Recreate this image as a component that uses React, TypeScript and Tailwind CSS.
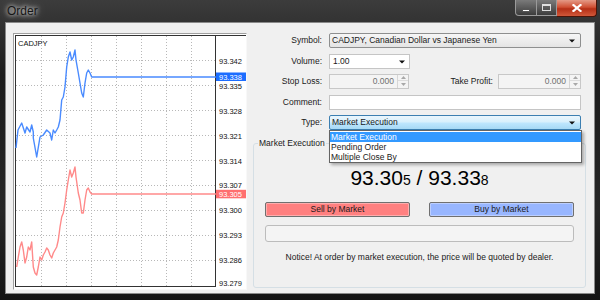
import React from "react";

const blue =
  "16,148 18,130 21.7,123 25,133 26.7,127 30,132 31.7,125 33.3,132 33.3,138 36.7,157 40,137 43.3,135 46.7,130 50,133 51.7,140 53.3,130 55,133 56.7,130 58.3,127 60,120 61.7,100 63.3,97 65,87 66.7,67 68.3,57 70,52 71.7,60 73.3,57 75,50 76,60 78.3,73 80,83 81.7,93 83.3,97 85,83 86.7,73 88.3,70 90,73 91.7,77 216,77";
const red =
  "16.7,267 18.3,257 20,247 21.7,242 23.3,250 25,263 26.7,257 28.3,247 30,250 31.7,242 33.3,267 35,273 36.7,275 38.3,267 40,257 41.7,260 43.3,255 45,252 46.7,248 48.3,250 50,255 51.7,258 53.3,253 55,250 56.7,247 58.3,240 60,227 61.7,217 63.3,213 65,203 66.7,190 68.3,180 70,170 71.7,177 73.3,173 75,167 76,177 78.3,193 80,200 81.7,213 83.3,213 85,200 86.7,190 88.3,188 90,192 91.7,194 216,194";

const labels: [string, number][] = [
  ["93.342", 61],
  ["93.335", 86],
  ["93.328", 111],
  ["93.321", 136],
  ["93.314", 161],
  ["93.307", 185],
  ["93.300", 210],
  ["93.293", 235],
  ["93.286", 260],
  ["93.279", 283],
];

function Chart() {
  const vx = [41.5, 66.5, 91.5, 116.5, 141.5, 166.5, 191.5];
  const hy = [60.5, 85.5, 110.5, 135.5, 160.5, 185.5, 210.5, 235.5, 260.5];
  return (
    <svg width="231" height="254" viewBox="15 35 231 254" className="block">
      {vx.map((x) => (
        <line key={"v" + x} x1={x} y1={36} x2={x} y2={286} stroke="#b8b8b8" strokeWidth="1" strokeDasharray="1 2" />
      ))}
      {hy.map((y) => (
        <line key={"h" + y} x1={16} y1={y} x2={215} y2={y} stroke="#b8b8b8" strokeWidth="1" strokeDasharray="1 2" />
      ))}
      <line x1={15} y1={35.5} x2={246} y2={35.5} stroke="#333" />
      <line x1={15.5} y1={35} x2={15.5} y2={287} stroke="#333" />
      <line x1={215.5} y1={35} x2={215.5} y2={287} stroke="#333" />
      <line x1={15} y1={286.5} x2={216} y2={286.5} stroke="#333" />
      <polyline points={blue} fill="none" stroke="#4a8bff" strokeWidth="1.4" strokeLinejoin="round" />
      <polyline points={red} fill="none" stroke="#ff8a8a" strokeWidth="1.4" strokeLinejoin="round" />
      <text x={18} y={45.5} fontSize="7.5" fill="#111" fontFamily="Liberation Sans, Arial, sans-serif">
        CADJPY
      </text>
      {labels.map(([t, y]) => (
        <text key={t} x={219} y={y + 2.7} fontSize="7.5" fill="#111" fontFamily="Liberation Sans, Arial, sans-serif">
          {t}
        </text>
      ))}
      <rect x={216} y={72.5} width={30} height={8.5} fill="#1c6dff" />
      <text x={219} y={79.5} fontSize="7.5" fill="#fff" fontFamily="Liberation Sans, Arial, sans-serif">
        93.338
      </text>
      <rect x={216} y={189.8} width={30} height={8.5} fill="#ff6f6f" />
      <text x={219} y={196.8} fontSize="7.5" fill="#fff" fontFamily="Liberation Sans, Arial, sans-serif">
        93.305
      </text>
    </svg>
  );
}

function Arrow() {
  return (
    <svg width="6" height="4" viewBox="0 0 6 4" className="block shrink-0">
      <path d="M0 0.5H6L3 3.5Z" fill="#111" />
    </svg>
  );
}

function Spinner() {
  return (
    <div className="w-[11px] h-[13px] flex flex-col border-l border-[#d6d6d6] bg-[#f4f4f4]">
      <div className="h-[6px] flex items-center justify-center border-b border-[#dcdcdc]">
        <svg width="5" height="3" viewBox="0 0 5 3" className="block">
          <path d="M0 3H5L2.5 0Z" fill="#a8a8a8" />
        </svg>
      </div>
      <div className="flex-1 flex items-center justify-center">
        <svg width="5" height="3" viewBox="0 0 5 3" className="block">
          <path d="M0 0H5L2.5 3Z" fill="#a8a8a8" />
        </svg>
      </div>
    </div>
  );
}

function TitleBar() {
  return (
    <div className="h-[22px] flex shrink-0">
      <span className="ml-[7px] mt-[4px] text-[12px] leading-[14px] text-[#151515] [text-shadow:0_0_4px_#fff,0_0_8px_#bbb]">
        Order
      </span>
      <div className="ml-auto mr-[3px] flex items-start">
        <div className="w-[22px] h-[16px] rounded-bl-[4px] border border-t-0 border-[#9a9a9a] bg-[linear-gradient(180deg,#7a7a7a,#3c3c3c)] flex items-end justify-center pb-[3px]">
          <div className="w-[8px] h-[3px] bg-white border border-[#555]" />
        </div>
        <div className="w-[20px] h-[16px] border border-t-0 border-l-0 border-[#9a9a9a] bg-[linear-gradient(180deg,#7a7a7a,#3c3c3c)] flex items-center justify-center">
          <div className="w-[9px] h-[7px] border border-white border-t-[2px] opacity-80" />
        </div>
        <div className="w-[40px] h-[17px] rounded-br-[4px] border border-t-0 border-l-0 border-[#4a1408] bg-[linear-gradient(180deg,#e49a86,#cf4f33_45%,#b42f16_55%,#d0583a)] flex items-center justify-center">
          <svg width="10" height="8" viewBox="0 0 10 8" className="block">
            <path d="M1.5 1L8.5 7M8.5 1L1.5 7" stroke="#fff" strokeWidth="2.2" strokeLinecap="square" />
          </svg>
        </div>
      </div>
    </div>
  );
}

export default function App() {
  return (
    <div className="w-[600px] h-[300px] flex flex-col overflow-hidden bg-[linear-gradient(180deg,#3c3c3c,#1c1c1c_25%,#262626_70%,#141414)] font-['Liberation_Sans',Arial,sans-serif] text-[8.5px] text-[#1a1a1a]">
      <TitleBar />
      <div className="mx-[5px] h-[272px] flex bg-[#f0f0f0] border border-[#8a8a8a] shrink-0">
        <div className="ml-[7px] mt-[10px] w-[234px] h-[257px] shrink-0 bg-white border border-t-[#a0a0a0] border-l-[#a0a0a0] border-b-[#f8f8f8] border-r-[#f8f8f8] p-[1px] overflow-hidden">
          <Chart />
        </div>
        <div className="flex-1 flex flex-col pt-[10px]">
          <div className="flex items-center h-[15px]">
            <span className="w-[75px] text-right shrink-0">Symbol:</span>
            <div className="ml-[7px] w-[252px] h-[15px] flex items-center border border-[#8e8f8f] rounded-[2px] bg-[linear-gradient(180deg,#f6f6f6,#e4e4e4)] pl-[2px] pr-[5px]">
              <span className="flex-1 leading-[13px]">CADJPY, Canadian Dollar vs Japanese Yen</span>
              <Arrow />
            </div>
          </div>
          <div className="flex items-center h-[15px] mt-[6px]">
            <span className="w-[75px] text-right shrink-0">Volume:</span>
            <div className="ml-[7px] w-[81px] h-[15px] flex items-center border border-[#c5c5c5] bg-white pl-[3px] pr-[4px]">
              <span className="flex-1 leading-[13px]">1.00</span>
              <Arrow />
            </div>
          </div>
          <div className="flex items-center h-[15px] mt-[5px]">
            <span className="w-[75px] text-right shrink-0">Stop Loss:</span>
            <div className="ml-[7px] w-[80px] h-[15px] flex items-center border border-[#c8c8c8] bg-[#f4f4f4]">
              <span className="flex-1 text-right pr-[3px] leading-[13px] text-[#707070]">0.000</span>
              <Spinner />
            </div>
            <span className="w-[84px] text-right shrink-0">Take Profit:</span>
            <div className="ml-[5px] w-[83px] h-[15px] flex items-center border border-[#c8c8c8] bg-[#f4f4f4]">
              <span className="flex-1 text-right pr-[3px] leading-[13px] text-[#707070]">0.000</span>
              <Spinner />
            </div>
          </div>
          <div className="flex items-center h-[15px] mt-[6px]">
            <span className="w-[75px] text-right shrink-0">Comment:</span>
            <div className="ml-[7px] w-[252px] h-[15px] border border-[#c5c5c5] bg-white" />
          </div>
          <div className="flex items-center h-[15px] mt-[5px]">
            <span className="w-[75px] text-right shrink-0">Type:</span>
            <div className="ml-[7px] w-[252px] h-[15px] relative">
              <div className="h-[15px] flex items-center border border-[#3c7fb1] rounded-[2px] bg-[linear-gradient(180deg,#eaf6fd,#d9f0fc_45%,#bee6fd_55%,#a7d9f5)] pl-[2px] pr-[5px]">
                <span className="flex-1 leading-[13px]">Market Execution</span>
                <Arrow />
              </div>
              <div className="absolute top-full left-0 w-[253px] z-10 border border-[#646464] bg-white pt-[1px] shadow-[2px_2px_3px_rgba(0,0,0,0.3)]">
                <div className="h-[10px] leading-[10px] pl-[1px] bg-[#3399ff] text-white">Market Execution</div>
                <div className="h-[10px] leading-[10px] pl-[1px]">Pending Order</div>
                <div className="h-[10px] leading-[10px] pl-[1px]">Multiple Close By</div>
              </div>
            </div>
          </div>
          <div className="mt-[13px] ml-[6px] w-[333px] h-[145px] border border-[#d5dfe5] rounded-[3px] relative flex flex-col items-center">
            <span className="absolute left-[4px] -top-[6px] bg-[#f0f0f0] px-[1px] leading-[10px]">Market Execution</span>
            <div className="mt-[22px] h-[24px] leading-[24px] text-[21px] text-black whitespace-pre">
              93.30<span className="text-[14px]">5</span> / 93.33<span className="text-[14px]">8</span>
            </div>
            <div className="mt-[12px] w-[309px] flex justify-between">
              <div className="w-[145px] h-[15px] border border-[#707070] rounded-[2px] bg-[#ff8080] shadow-[inset_0_0_0_1px_rgba(255,255,255,0.35)] flex items-center justify-center leading-[13px]">
                Sell by Market
              </div>
              <div className="w-[145px] h-[15px] border border-[#707070] rounded-[2px] bg-[#98b6ff] shadow-[inset_0_0_0_1px_rgba(255,255,255,0.35)] flex items-center justify-center leading-[13px]">
                Buy by Market
              </div>
            </div>
            <div className="mt-[8px] w-[309px] h-[17px] border border-[#bcbcbc] rounded-[3px] bg-[#f4f4f4]" />
            <div className="mt-[10px] leading-[10px]">
              Notice! At order by market execution, the price will be quoted by dealer.
            </div>
          </div>
        </div>
      </div>
    </div>
  );
}
